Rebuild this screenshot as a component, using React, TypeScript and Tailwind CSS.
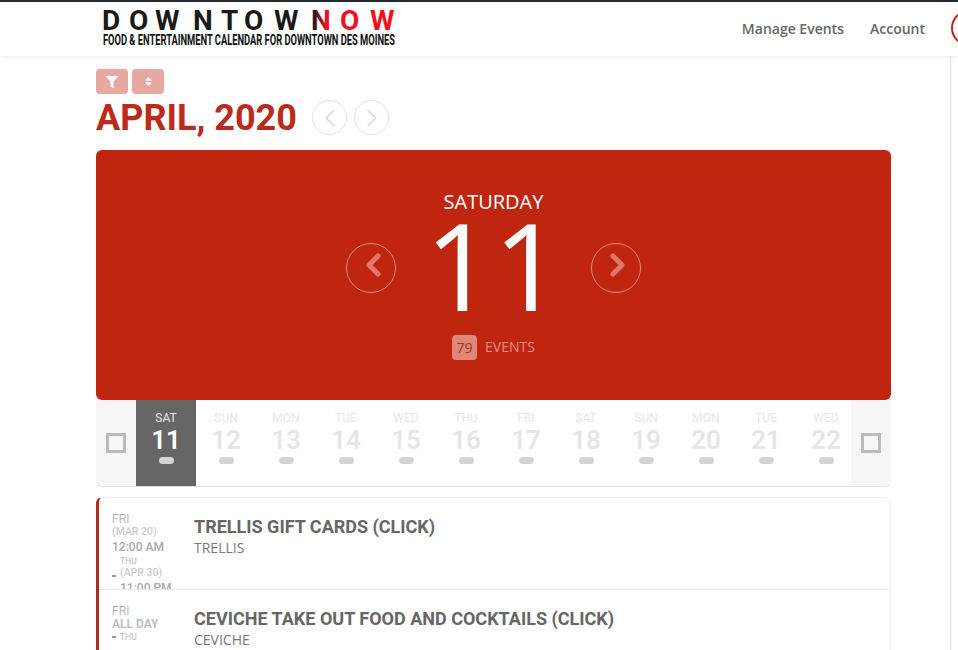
import { ChevronLeft, ChevronRight } from 'lucide-react';
import { FaFilter, FaSort } from 'react-icons/fa';

const days = [
  ['SUN', '12'],
  ['MON', '13'],
  ['TUE', '14'],
  ['WED', '15'],
  ['THU', '16'],
  ['FRI', '17'],
  ['SAT', '18'],
  ['SUN', '19'],
  ['MON', '20'],
  ['TUE', '21'],
  ['WED', '22'],
];

const roboto = "font-['Roboto',sans-serif]";
const openSans = "font-['Open_Sans',sans-serif]";

const Logo = () => (
  <svg width="296" height="40" viewBox="0 0 296 40" className="block">
    <defs>
      <linearGradient id="logo-n">
        <stop offset="0.1" stopColor="#1a1a1a" />
        <stop offset="0.75" stopColor="#ee1122" />
      </linearGradient>
    </defs>
    <text x="0 27 53 91 119 142 172" y="23" fontFamily="Roboto" fontWeight="700" fontSize="28" fill="#1a1a1a">
      DOWNTOW
    </text>
    <text x="209" y="23" fontFamily="Roboto" fontWeight="700" fontSize="28" fill="url(#logo-n)">
      N
    </text>
    <text x="238 268" y="23" fontFamily="Roboto" fontWeight="700" fontSize="28" fill="#ee1122">
      OW
    </text>
    <text x="1" y="38" fontFamily="Roboto" fontWeight="700" fontSize="15" fill="#111" textLength="292" lengthAdjust="spacingAndGlyphs">
      FOOD &amp; ENTERTAINMENT CALENDAR FOR DOWNTOWN DES MOINES
    </text>
  </svg>
);

const Header = () => (
  <header className="relative z-10 flex h-[56px] items-start justify-between overflow-hidden border-t-2 border-[#23282d] bg-white pl-[102px] shadow-[0_1px_4px_rgba(0,0,0,0.08)]">
    <div className="pt-[5px]">
      <Logo />
    </div>
    <nav className={`${openSans} mr-[-29px] flex h-full items-center gap-[26px] pb-[2px] text-[14px] font-semibold text-[#666]`}>
      <span>Manage Events</span>
      <span>Account</span>
      <span className="h-[36px] w-[36px] rounded-full border-2 border-[#c0260f]" />
    </nav>
  </header>
);

const DayCell = ({ name, num }: { name: string; num: string }) => (
  <div className="flex w-[60px] shrink-0 flex-col items-center pt-[11px]">
    <span className={`${roboto} text-[12px] leading-[14px] text-[#e6e6e6]`}>{name}</span>
    <span className={`${roboto} text-[26px] leading-[30px] font-semibold text-[#e6e6e6]`}>{num}</span>
    <span className="mt-[2px] h-[7px] w-[15px] rounded-full bg-[#d4d4d4]" />
  </div>
);

const EventRow = ({ children, title, place }: { children: React.ReactNode; title: string; place: string }) => (
  <div className="flex h-[92px] overflow-hidden border-b border-[#e8e8e8]">
    <div className={`${roboto} w-[95px] shrink-0 pt-[14px] pl-[13px]`}>{children}</div>
    <div className="pt-[18px]">
      <div className={`${roboto} text-[18px] leading-[22px] font-bold text-[#666]`}>{title}</div>
      <div className={`${openSans} text-[14px] leading-[20px] text-[#777]`}>{place}</div>
    </div>
  </div>
);

const HeroArrow = ({ dir }: { dir: 'left' | 'right' }) => (
  <button className="mt-[21px] flex h-[50px] w-[50px] items-center justify-center rounded-full border border-[#e08a7c]">
    <svg width="24" height="28" viewBox="0 0 24 28" fill="none" stroke="#e0796b" strokeWidth="5" strokeLinecap="round" strokeLinejoin="round" className="mb-[6px]">
      {dir === 'left' ? <polyline points="19,5 10,14 19,23" /> : <polyline points="9,5 18,14 9,23" />}
    </svg>
  </button>
);

export default function App() {
  return (
    <div className="h-[650px] w-[958px] overflow-hidden bg-white">
      <Header />
      <div className="flex h-[594px]">
        <main className="w-[951px] border-r border-[#e2e2e2] pt-[13px] pl-[96px]">
          <div className="flex gap-[4px]">
            <button className="flex h-[25px] w-[32px] items-center justify-center rounded-[4px] bg-[#e6a8a0] text-white">
              <FaFilter size={12} />
            </button>
            <button className="flex h-[25px] w-[32px] items-center justify-center rounded-[4px] bg-[#e6a8a0] text-white">
              <FaSort size={11} />
            </button>
          </div>
          <div className="mt-[6px] flex h-[35px] items-center">
            <h1 className={`${roboto} w-[216px] pt-[2px] text-[36px] leading-[35px] font-bold whitespace-nowrap text-[#bb2a1b]`}>APRIL, 2020</h1>
            <button className="flex h-[35px] w-[35px] items-center justify-center rounded-full border border-[#e2e2e2] text-[#e0e0e0]">
              <ChevronLeft size={30} strokeWidth={1.5} />
            </button>
            <button className="ml-[7px] flex h-[35px] w-[35px] items-center justify-center rounded-full border border-[#e2e2e2] text-[#e0e0e0]">
              <ChevronRight size={30} strokeWidth={1.5} />
            </button>
          </div>

          <div className="mt-[15px] w-[795px]">
            <section className="flex h-[250px] flex-col items-center rounded-[6px] bg-[#c0260f] text-white">
              <div className={`${openSans} mt-[40px] text-[20px] leading-[24px]`}>SATURDAY</div>
              <div className="mt-[8px] flex h-[86px] items-start">
                <HeroArrow dir="left" />
                <div className={`${openSans} w-[195px] text-center text-[120px] leading-[86px]`}>11</div>
                <HeroArrow dir="right" />
              </div>
              <div className={`${openSans} mt-[27px] flex items-center gap-[8px] text-[14px] text-[#e58e80]`}>
                <span className="flex h-[25px] w-[25px] items-center justify-center rounded-[4px] bg-[#e0877a] text-[#8f3a2e]">79</span>
                <span className="pb-[2px]">EVENTS</span>
              </div>
            </section>

            <div className="relative flex h-[87px] overflow-hidden rounded-b-[6px] border-b border-[#e2e2e2]">
              <div className="flex w-[40px] shrink-0 items-center justify-center bg-[#f6f6f6]">
                <span className="h-[20px] w-[20px] border-[3px] border-[#bfbaba]" />
              </div>
              <div className="flex w-[60px] shrink-0 flex-col items-center bg-[#666] pt-[11px]">
                <span className={`${roboto} text-[12px] leading-[14px] text-[#e6e6e6]`}>SAT</span>
                <span className={`${roboto} text-[26px] leading-[30px] font-semibold text-white`}>11</span>
                <span className="mt-[2px] h-[7px] w-[15px] rounded-full bg-[#d4d4d4]" />
              </div>
              {days.map(([name, num]) => (
                <DayCell key={num} name={name} num={num} />
              ))}
              <div className="absolute top-0 right-0 bottom-0 flex w-[40px] items-center justify-center bg-[#f6f6f6]">
                <span className="h-[20px] w-[20px] border-[3px] border-[#bfbaba]" />
              </div>
            </div>

            <div className="mt-[10px] rounded-[6px] border border-l-[3px] border-[#eeeeee] border-l-[#b22a1d]">
              <EventRow title="TRELLIS GIFT CARDS (CLICK)" place="TRELLIS">
                <div className="text-[12px] leading-[14px] font-light text-[#999]">FRI</div>
                <div className="text-[10.5px] leading-[12px] font-medium text-[#ccc]">(MAR 20)</div>
                <div className="mt-[1px] text-[12px] leading-[16px] font-medium text-[#aaa]">12:00 AM</div>
                <div className="flex items-center">
                  <span className="h-[2px] w-[4px] shrink-0 bg-[#999]" />
                  <div className="ml-[4px]">
                    <div className="text-[8.5px] leading-[12px] text-[#bbb]">THU</div>
                    <div className="text-[10.5px] leading-[12px] font-medium text-[#ccc]">(APR 30)</div>
                    <div className="mt-[1px] text-[12px] leading-[16px] font-medium text-[#aaa]">11:00 PM</div>
                  </div>
                </div>
              </EventRow>
              <EventRow title="CEVICHE TAKE OUT FOOD AND COCKTAILS (CLICK)" place="CEVICHE">
                <div className="text-[12px] leading-[14px] font-light text-[#999]">FRI</div>
                <div className="text-[12px] leading-[13px] font-semibold text-[#bbb]">ALL DAY</div>
                <div className="flex items-center gap-[4px]">
                  <span className="h-[2px] w-[4px] shrink-0 bg-[#999]" />
                  <span className="text-[8.5px] leading-[12px] text-[#bbb]">THU</span>
                </div>
              </EventRow>
            </div>
          </div>
        </main>
      </div>
    </div>
  );
}
